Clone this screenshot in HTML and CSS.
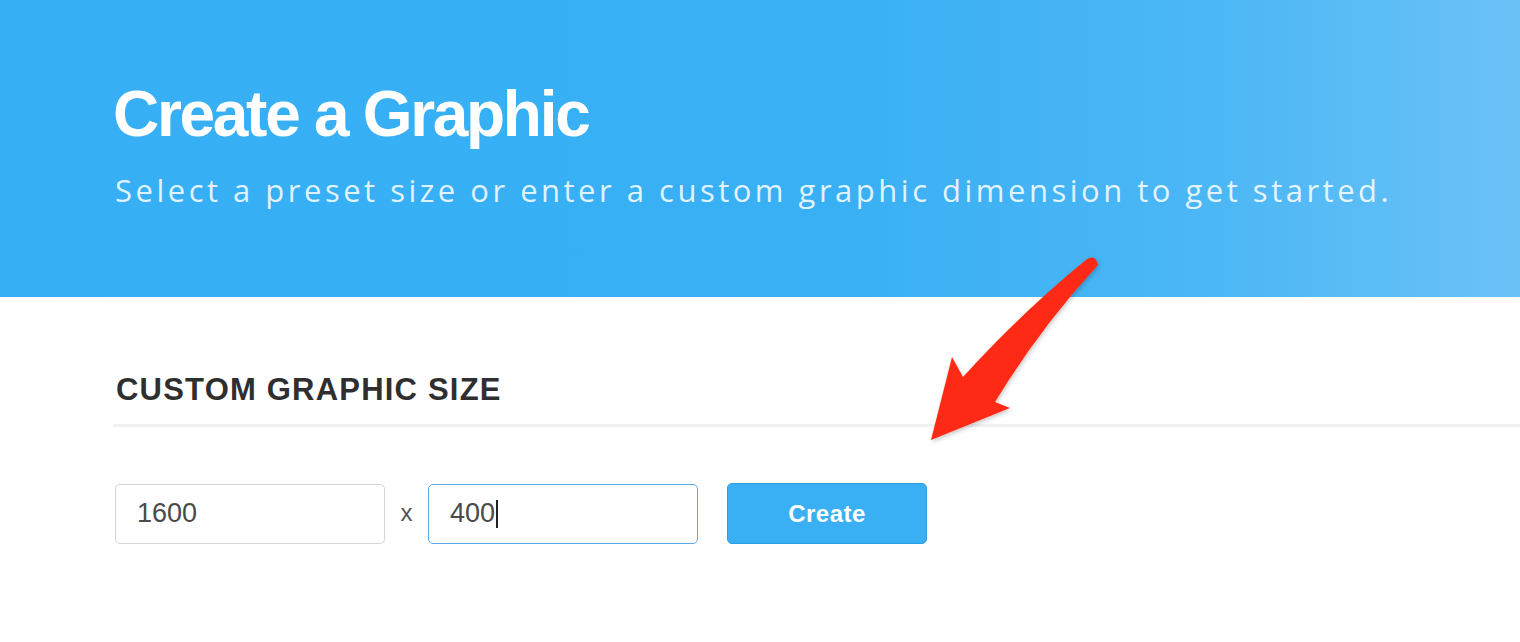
FILE: index.html
```html
<!DOCTYPE html>
<html lang="en">
<head>
<meta charset="utf-8">
<title>Create a Graphic</title>
<link rel="stylesheet" href="styles.css">
</head>
<body>
<div class="page">
  <header class="hero">
    <h1 class="hero-title">Create a Graphic</h1>
    <p class="hero-sub">Select a preset size or enter a custom graphic dimension to get started.</p>
  </header>
  <section class="custom">
    <h2 class="custom-title">CUSTOM GRAPHIC SIZE</h2>
    <div class="size-row">
      <div class="field">1600</div>
      <span class="times">x</span>
      <div class="field field-focus">400<span class="caret"></span></div>
      <button class="create-btn" type="button">Create</button>
    </div>
  </section>
  <svg class="arrow" width="1520" height="642" viewBox="0 0 1520 642" aria-hidden="true">
    <defs>
      <filter id="sh" x="-20%" y="-20%" width="140%" height="140%">
        <feDropShadow dx="1" dy="2" stdDeviation="2" flood-color="#000" flood-opacity="0.22"/>
      </filter>
    </defs>
    <path filter="url(#sh)" fill="#ff2c14" d="M1087,259 Q1096,254 1098,265 Q1040,328 995,402 L1010,408 L931,440 L952,357 L963,377 Q1022,312 1087,259 Z"/>
  </svg>
</div>
</body>
</html>
```

FILE: styles.css
```css
* { box-sizing: border-box; }
html, body { margin: 0; padding: 0; background: #ffffff; }
.page {
  position: relative;
  width: 1520px;
  height: 642px;
  overflow: hidden;
  font-family: "Liberation Sans", Arial, sans-serif;
}
.hero {
  height: 297px;
  padding: 82px 0 0 113px;
  background: linear-gradient(90deg, #36aff5 0%, #39b0f4 55%, #4cb7f5 80%, #6bc2f7 100%);
}
.hero-title {
  margin: 0;
  font-family: "Liberation Sans", Arial, sans-serif;
  font-weight: 700;
  font-size: 64px;
  line-height: 1;
  letter-spacing: -2.3px;
  color: #ffffff;
}
.hero-sub {
  margin: 26px 0 0 2px;
  font-family: "Open Sans", sans-serif;
  font-weight: 400;
  font-size: 31px;
  line-height: 1.2;
  letter-spacing: 3.5px;
  color: rgba(255, 255, 255, 0.86);
  white-space: nowrap;
}
.custom {
  padding: 77px 0 0 113px;
}
.custom-title {
  margin: 0;
  padding: 0 0 19px 3px;
  font-family: "Liberation Sans", Arial, sans-serif;
  font-weight: 700;
  font-size: 31px;
  line-height: 1;
  letter-spacing: 1.2px;
  color: #2f2f2f;
  border-bottom: 3px solid #f0f1f3;
}
.size-row {
  display: flex;
  align-items: center;
  margin: 56px 0 0 2px;
  height: 61px;
}
.field {
  display: flex;
  align-items: center;
  width: 270px;
  height: 60px;
  padding-left: 21px;
  border: 1px solid #d4d4d6;
  border-radius: 5px;
  font-family: "Liberation Sans", Arial, sans-serif;
  font-size: 27px;
  color: #4a4a4a;
  background: #ffffff;
}
.field-focus {
  border-color: #5ca8e2;
}
.caret {
  display: inline-block;
  width: 2px;
  height: 28px;
  margin-left: 1px;
  background: #222;
}
.times {
  width: 43px;
  text-align: center;
  font-size: 24px;
  color: #555555;
  padding-bottom: 2px;
}
.create-btn {
  margin-left: 29px;
  width: 200px;
  height: 61px;
  border: 1px solid #2c9de2;
  border-radius: 5px;
  background: #3aaff3;
  color: #ffffff;
  font-family: "Liberation Sans", Arial, sans-serif;
  font-weight: 700;
  font-size: 24px;
  letter-spacing: 0.5px;
  padding: 0;
}
.arrow {
  position: absolute;
  left: 0;
  top: 0;
  pointer-events: none;
}
```
